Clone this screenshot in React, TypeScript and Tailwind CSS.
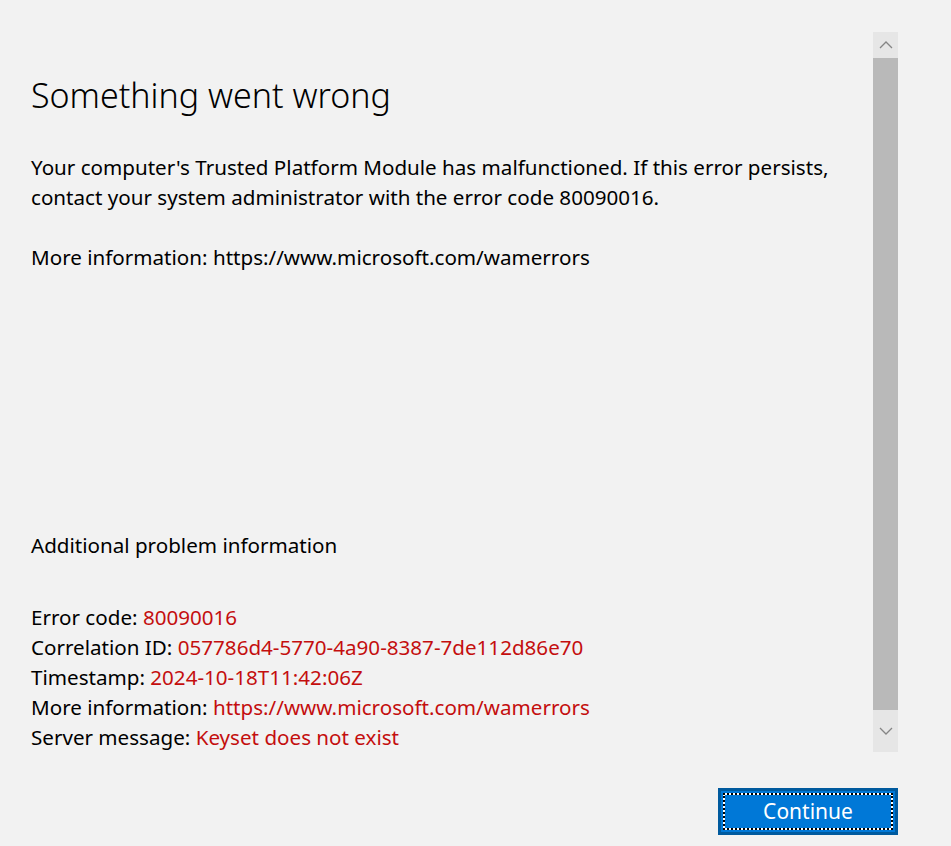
import React from "react";

const details = [
    { label: "Error code:", value: "80090016" },
    { label: "Correlation ID:", value: "057786d4-5770-4a90-8387-7de112d86e70" },
    { label: "Timestamp:", value: "2024-10-18T11:42:06Z" },
    { label: "More information:", value: "https://www.microsoft.com/wamerrors" },
    { label: "Server message:", value: "Keyset does not exist" },
];

// fake win32 style scrollbar
const ScrollBar = () => (
    <div className="flex flex-col w-[25px] h-[720px] bg-[#e8e8e8]">
        <div className="h-[26px] flex items-center justify-center bg-[#e6e6e6]">
            <svg width="14" height="8" viewBox="0 0 14 8" fill="none">
                <path d="M1 7 L7 1 L13 7" stroke="#858585" strokeWidth="1.3" />
            </svg>
        </div>
        <div className="flex-1 bg-[#b9b9b9]" />
        <div className="h-[42px] flex items-center justify-center bg-[#e6e6e6]">
            <svg width="14" height="8" viewBox="0 0 14 8" fill="none">
                <path d="M1 1 L7 7 L13 1" stroke="#858585" strokeWidth="1.3" />
            </svg>
        </div>
    </div>
);

const App: React.FC = () => {
    return (
        <div className="w-[951px] h-[846px] bg-[#f2f2f2] text-black overflow-hidden font-['Noto_Sans','Open_Sans',sans-serif]">
            <div className="flex">
                <div className="flex-1 pl-[31px] pt-[72px] h-[752px] flex flex-col text-[20.6px] leading-[30px]">
                    <h1 className="text-[34px] leading-[46px] font-light">Something went wrong</h1>
                    <p className="mt-[34px]">
                        Your computer's Trusted Platform Module has malfunctioned. If this error persists,
                        <br />
                        contact your system administrator with the error code 80090016.
                    </p>
                    <p className="mt-[30px]">More information: https://www.microsoft.com/wamerrors</p>
                    <div className="mt-auto">
                        <p>Additional problem information</p>
                        <div className="mt-[42px]">
                            {details.map((d) => (
                                <p key={d.label}>
                                    {d.label} <span className="text-[#c40e0e]">{d.value}</span>
                                </p>
                            ))}
                        </div>
                    </div>
                </div>
                <div className="pt-[32px] pr-[53px]">
                    <ScrollBar />
                </div>
            </div>
            <div className="flex justify-end pr-[53px] mt-[36px]">
                <button className="w-[180px] h-[47px] bg-[#0078d7] border-[3px] border-[#005a9e] p-[2px]">
                    <div className="h-full w-full border-2 border-white outline-2 outline-dotted outline-black outline-offset-[-2px] flex items-center justify-center text-white text-[21px]">
                        Continue
                    </div>
                </button>
            </div>
        </div>
    );
};

export default App;
